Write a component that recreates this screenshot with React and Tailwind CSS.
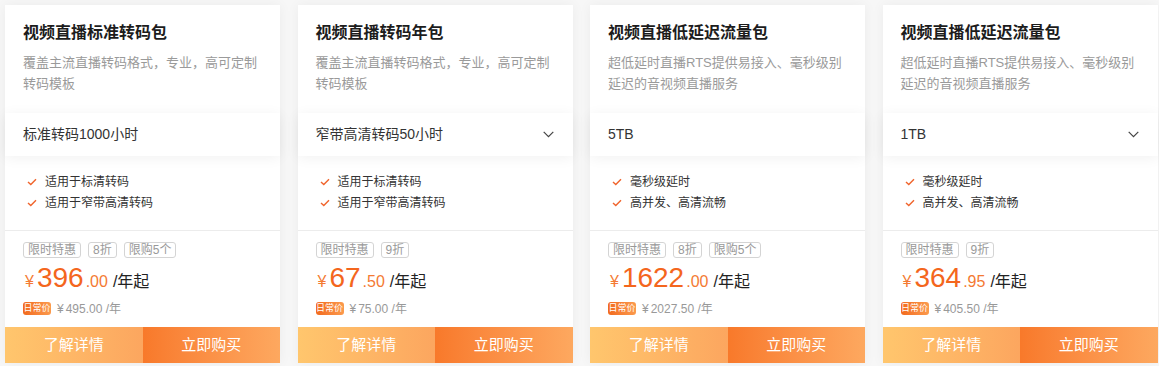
import React from "react";

const plans = [
  {
    title: "视频直播标准转码包",
    desc: ["覆盖主流直播转码格式，专业，高可定制", "转码模板"],
    spec: "标准转码1000小时",
    select: false,
    features: ["适用于标清转码", "适用于窄带高清转码"],
    tags: ["限时特惠", "8折", "限购5个"],
    price: "396",
    cents: ".00",
    regular: "495.00",
  },
  {
    title: "视频直播转码年包",
    desc: ["覆盖主流直播转码格式，专业，高可定制", "转码模板"],
    spec: "窄带高清转码50小时",
    select: true,
    features: ["适用于标清转码", "适用于窄带高清转码"],
    tags: ["限时特惠", "9折"],
    price: "67",
    cents: ".50",
    regular: "75.00",
  },
  {
    title: "视频直播低延迟流量包",
    desc: ["超低延时直播RTS提供易接入、毫秒级别", "延迟的音视频直播服务"],
    spec: "5TB",
    select: false,
    features: ["毫秒级延时", "高并发、高清流畅"],
    tags: ["限时特惠", "8折", "限购5个"],
    price: "1622",
    cents: ".00",
    regular: "2027.50",
  },
  {
    title: "视频直播低延迟流量包",
    desc: ["超低延时直播RTS提供易接入、毫秒级别", "延迟的音视频直播服务"],
    spec: "1TB",
    select: true,
    features: ["毫秒级延时", "高并发、高清流畅"],
    tags: ["限时特惠", "9折"],
    price: "364",
    cents: ".95",
    regular: "405.50",
  },
];

function CheckMark() {
  return (
    <svg width="10" height="8" viewBox="0 0 10 8" className="shrink-0">
      <polyline points="1,4 3.8,6.6 9,1.2" fill="none" stroke="#f0642c" strokeWidth="1.4" />
    </svg>
  );
}

function Chevron() {
  return (
    <svg width="11" height="7" viewBox="0 0 11 7">
      <polyline points="0.7,0.8 5.5,5.6 10.3,0.8" fill="none" stroke="#444" strokeWidth="1.2" />
    </svg>
  );
}

function PlanCard({ plan }) {
  return (
    <div className="w-[275px] h-[358px] bg-white flex flex-col shadow-[0_0_12px_rgba(0,0,0,0.05)]">
      {/* header */}
      <div className="px-[18px] pt-[17px] pb-[19px]">
        <h3 className="text-[16px] leading-[22px] font-bold text-[#1c1c1c]">{plan.title}</h3>
        <div className="mt-[8px] text-[13px] leading-[21px] text-[#9a9a9a]">
          {plan.desc.map((line) => (
            <div key={line}>{line}</div>
          ))}
        </div>
      </div>

      {/* spec select */}
      <div className="h-[43px] px-[18px] pr-[19px] flex items-center justify-between bg-white shadow-[0_2px_14px_rgba(0,0,0,0.06)]">
        <span className="text-[14px] text-[#333]">{plan.spec}</span>
        {plan.select && <Chevron />}
      </div>

      {/* features */}
      <div className="px-[22px] pt-[15px] pb-[17px] border-b border-[#ececec]">
        {plan.features.map((f) => (
          <div key={f} className="h-[21px] flex items-center gap-[8px] text-[12px] text-[#333]">
            <CheckMark />
            <span>{f}</span>
          </div>
        ))}
      </div>

      {/* price */}
      <div className="px-[18px] pt-[11px]">
        <div className="flex gap-[7px]">
          {plan.tags.map((t) => (
            <span
              key={t}
              className="h-[16px] px-[4px] border border-[#d4d4d4] rounded-[3px] text-[12px] leading-[14px] text-[#999]"
            >
              {t}
            </span>
          ))}
        </div>
        <div className="mt-[4px] h-[32px] flex items-baseline leading-[32px]">
          <span className="ml-[2px] mr-[3px] text-[16px] text-[#f47a33]">¥</span>
          <span className="text-[28px] text-[#f4661d]">{plan.price}</span>
          <span className="ml-[2px] text-[16px] text-[#f47a33]">{plan.cents}</span>
          <span className="ml-[5px] text-[16px] text-[#222]">/年起</span>
        </div>
        <div className="mt-[8px] h-[13px] flex items-center gap-[6px]">
          <span className="w-[28px] h-[13px] rounded-[3px] bg-gradient-to-r from-[#f26a1c] to-[#fb9a4c] text-white text-[9px] leading-[13px] text-center">
            日常价
          </span>
          <span className="text-[12px] text-[#999]">
            ¥<span className="ml-[2px]">{plan.regular}</span> /年
          </span>
        </div>
      </div>

      {/* actions */}
      <div className="mt-auto h-[36px] flex text-white text-[15px]">
        <button className="flex-1 bg-gradient-to-r from-[#ffc66d] to-[#fca65f] flex items-center justify-center">
          了解详情
        </button>
        <button className="flex-1 bg-gradient-to-r from-[#f8792a] to-[#fda85f] flex items-center justify-center">
          立即购买
        </button>
      </div>
    </div>
  );
}

export default function App() {
  return (
    <div
      className="w-[1159px] h-[366px] bg-[#f7f7f7] pt-[5px] pl-[5px] flex gap-[17.5px]"
      style={{ fontFamily: '"Liberation Sans", "Noto Sans CJK SC", sans-serif' }}
    >
      {plans.map((p, i) => (
        <PlanCard key={i} plan={p} />
      ))}
    </div>
  );
}
